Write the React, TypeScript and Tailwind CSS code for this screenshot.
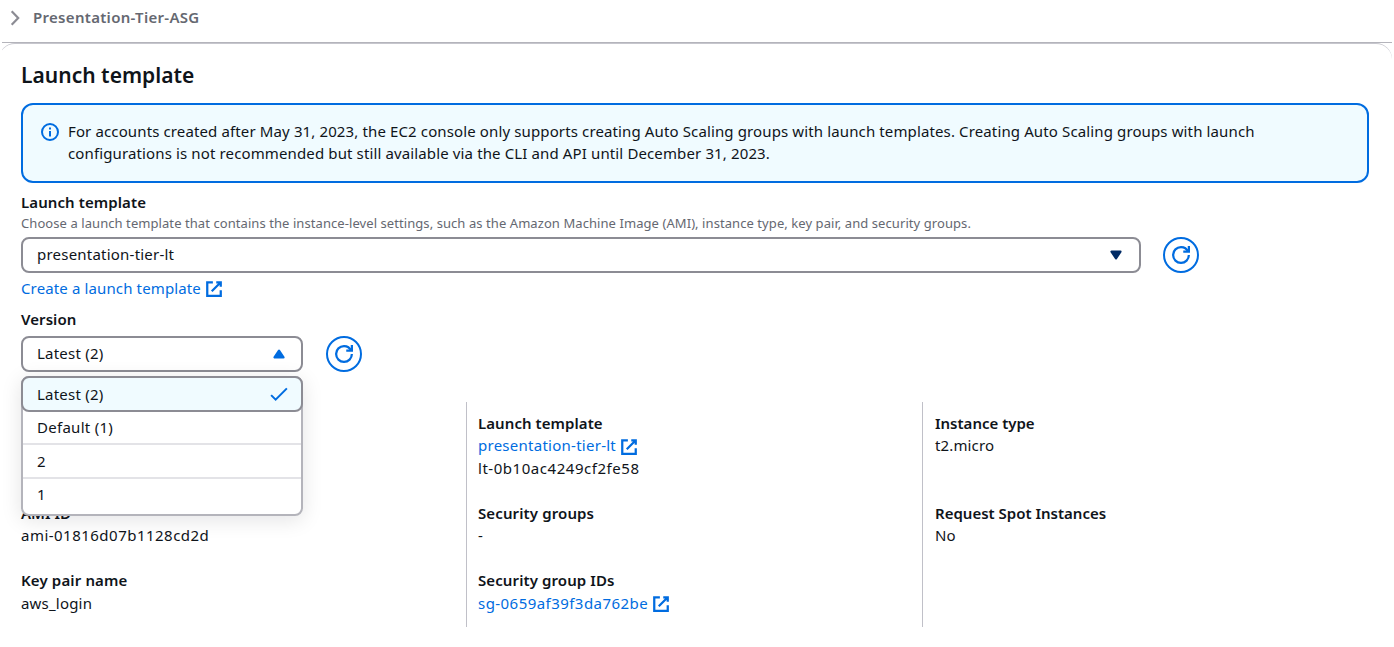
import React from 'react';

const ExternalIcon = () => (
  <svg viewBox="0 0 16 16" className="size-[18px] shrink-0" fill="none" stroke="#006ce0" strokeWidth="2">
    <path d="M10 2h4v4M6 10l8-8M14 9.048V14H2V2h5" />
  </svg>
);

const RefreshButton = () => (
  <button className="flex size-9 shrink-0 items-center justify-center rounded-full border-2 border-[#006ce0] bg-white">
    <svg viewBox="0 0 16 16" className="size-[18px]" fill="none" stroke="#006ce0" strokeWidth="2">
      <path d="M10 5h5V0" />
      <path d="M15 8a6.957 6.957 0 0 1-7 7 6.957 6.957 0 0 1-7-7 6.957 6.957 0 0 1 7-7 6.87 6.87 0 0 1 6.3 4" />
    </svg>
  </button>
);

const Link = ({
  children,
  className = '',
  iconClass = 'pt-[2px]',
}: {
  children: React.ReactNode;
  className?: string;
  iconClass?: string;
}) => (
  <a className="flex h-[22px] items-center text-[#006ce0]">
    <span className={className}>{children}</span>
    <span className={`ml-1 ${iconClass}`}>
      <ExternalIcon />
    </span>
  </a>
);

const Label = ({ children, className = '' }: { children: React.ReactNode; className?: string }) => (
  <div className={`h-[22px] font-semibold ${className}`}>{children}</div>
);

export default function App() {
  return (
    <div className="h-[647px] w-full overflow-hidden bg-white font-['Noto_Sans',sans-serif] text-[15px] leading-[22px] whitespace-nowrap text-[#0f141a]">
      <div className="mx-[2px] overflow-hidden">
        <nav className="flex h-[43px] items-start border-b border-[#b4b4bb] pt-[6px] pl-[8px]">
          <svg viewBox="0 0 12 16" className="mt-1 h-4 w-3" fill="none" stroke="#8c8c94" strokeWidth="2.2">
            <path d="M1.7 1.2 8.2 8l-6.5 6.8" />
          </svg>
          <span className="ml-[11px] font-semibold tracking-[0.3px] text-[#656871]">Presentation-Tier-ASG</span>
        </nav>

        <main className="-ml-[3px] rounded-t-2xl border-t border-[#c6c6cd] pt-[17px] pr-[23px] pl-[22px]">
          <h1 className="text-[21px] leading-7 font-semibold tracking-[0.02px]">Launch template</h1>

          <section className="mt-[14px] flex h-20 rounded-xl border-2 border-[#006ce0] bg-[#f0fbff] pt-[15px] pl-[18px]">
            <svg viewBox="0 0 18 18" className="mt-[3px] size-[18px]" fill="none" stroke="#006ce0" strokeWidth="2">
              <circle cx="9" cy="9" r="8" />
              <path d="M9 4.5v2M9 8v5.5" />
            </svg>
            <p className="ml-[9px]">
              <span className="block tracking-[0.126px]">
                For accounts created after May 31, 2023, the EC2 console only supports creating Auto Scaling groups with launch templates. Creating Auto Scaling groups with launch
              </span>
              <span className="block tracking-[0.128px]">
                configurations is not recommended but still available via the CLI and API until December 31, 2023.
              </span>
            </p>
          </section>

          <Label className="mt-2 tracking-[0.09px]">Launch template</Label>
          <p className="mt-px text-[13px] leading-[18px] tracking-[0.072px] text-[#656871]">
            Choose a launch template that contains the instance-level settings, such as the Amazon Machine Image (AMI), instance type, key pair, and security groups.
          </p>
          <div className="mt-[5px] flex gap-[22px]">
            <div className="flex h-9 w-[1120px] items-center justify-between rounded-lg border-2 border-[#8c8c94] pr-[14px] pl-[14px]">
              <span className="pb-[2px] tracking-[0.22px]">presentation-tier-lt</span>
              <svg viewBox="0 0 16 16" className="size-[18px]" fill="#002b66" stroke="#002b66" strokeWidth="2" strokeLinejoin="round">
                <path d="M4 5h8l-4 6-4-6z" />
              </svg>
            </div>
            <RefreshButton />
          </div>
          <div className="mt-1">
            <Link className="tracking-[0.13px]">Create a launch template</Link>
          </div>

          <Label className="mt-[9px] tracking-[0.06px]">Version</Label>
          <div className="relative mt-[6px] flex gap-[22.5px]">
            <div className="flex h-9 w-[282px] items-center justify-between rounded-lg border-2 border-[#8c8c94] pr-[13px] pl-[14px]">
              <span className="pb-[2px] tracking-[0.22px]">Latest (2)</span>
              <svg viewBox="0 0 16 16" className="size-[18px]" fill="#006ce0" stroke="#006ce0" strokeWidth="2" strokeLinejoin="round">
                <path d="M4 11h8L8 5l-4 6z" />
              </svg>
            </div>
            <RefreshButton />

            <ul className="absolute top-10 left-0 z-10 h-[140px] w-[282px] rounded-lg border-2 border-[#b4b4bb] bg-white shadow-[0_4px_20px_1px_rgba(0,7,22,0.1)]">
              <li className="-mx-[2px] -mt-[2px] flex h-9 items-center justify-between rounded-lg border-2 border-[#8c8c94] bg-[#f0fbff] pr-[13px] pl-[14px]">
                <span className="tracking-[0.22px]">Latest (2)</span>
                <svg viewBox="0 0 16 16" className="size-[18px]" fill="none" stroke="#006ce0" strokeWidth="1.8">
                  <path d="m1 9 4 4L15 3" />
                </svg>
              </li>
              <li className="h-[33px] border-b-2 border-[#e3e3e7] pt-1 pl-[14px] tracking-[0.28px]">Default (1)</li>
              <li className="h-[34px] border-b-2 border-[#e3e3e7] pt-[5px] pl-[14px]">2</li>
              <li className="pt-1 pl-[14px]">1</li>
            </ul>
          </div>

          <div className="mt-[30px] grid h-[225px] grid-cols-[445px_456px_1fr]">
            <dl className="pt-[100px]">
              <Label>AMI ID</Label>
              <dd className="mb-[23px] tracking-[0.48px]">ami-01816d07b1128cd2d</dd>
              <Label className="tracking-[0.14px]">Key pair name</Label>
              <dd className="mt-px tracking-[0.2px]">aws_login</dd>
            </dl>
            <dl className="border-l border-[#c0c0c8] pt-[10px] pl-[11px]">
              <Label className="tracking-[0.07px]">Launch template</Label>
              <Link className="tracking-[0.26px]" iconClass="pt-[4px]">presentation-tier-lt</Link>
              <dd className="mt-px mb-[23px] tracking-[0.54px]">lt-0b10ac4249cf2fe58</dd>
              <Label className="tracking-[0.12px]">Security groups</Label>
              <dd className="mb-[23px]">-</dd>
              <Label className="mb-px tracking-[0.1px]">Security group IDs</Label>
              <Link className="tracking-[0.45px]">sg-0659af39f3da762be</Link>
            </dl>
            <dl className="border-l border-[#c0c0c8] pt-[10px] pl-3">
              <Label>Instance type</Label>
              <dd className="mb-[46px] tracking-[0.13px]">t2.micro</dd>
              <Label>Request Spot Instances</Label>
              <dd>No</dd>
            </dl>
          </div>
        </main>
      </div>
    </div>
  );
}
